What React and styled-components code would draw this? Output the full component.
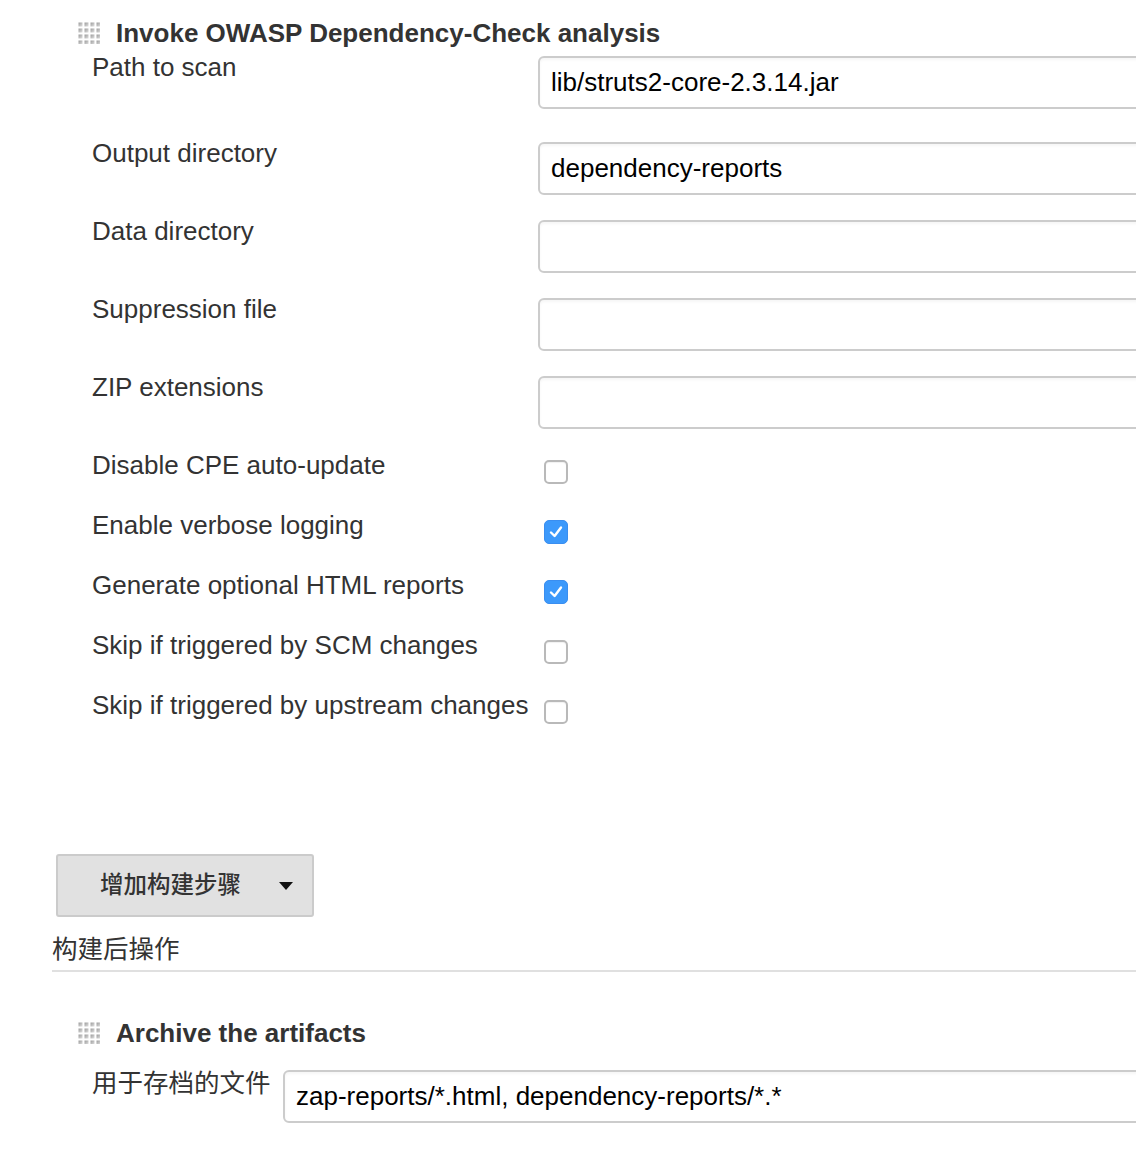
import styled, { createGlobalStyle } from "styled-components";

const GlobalStyle = createGlobalStyle`
  html, body {
    margin: 0;
    padding: 0;
    background: #fff;
    overflow: hidden;
  }
  body {
    font-family: "Liberation Sans", "Noto Sans CJK SC", Arial, sans-serif;
    color: #333;
  }
`;

const builderFields = [
  { label: "Path to scan", value: "lib/struts2-core-2.3.14.jar", height: 86 },
  { label: "Output directory", value: "dependency-reports" },
  { label: "Data directory", value: "" },
  { label: "Suppression file", value: "" },
  { label: "ZIP extensions", value: "" },
];

const builderOptions = [
  { label: "Disable CPE auto-update", checked: false },
  { label: "Enable verbose logging", checked: true },
  { label: "Generate optional HTML reports", checked: true },
  { label: "Skip if triggered by SCM changes", checked: false },
  { label: "Skip if triggered by upstream changes", checked: false },
];

const Grip = () => (
  <svg width="22" height="22" viewBox="0 0 22 22">
    <defs>
      <linearGradient id="dot" x1="0" y1="0" x2="1" y2="1">
        <stop offset="0" stopColor="#9a9a9a" />
        <stop offset="1" stopColor="#e2e2e2" />
      </linearGradient>
    </defs>
    {[0, 1, 2, 3].map((r) =>
      [0, 1, 2, 3].map((c) => (
        <rect
          key={`${r}-${c}`}
          x={c * 6 + 0.5}
          y={r * 6 + 0.5}
          width="4"
          height="4"
          fill="url(#dot)"
        />
      ))
    )}
  </svg>
);

const App = () => {
  return (
    <Page>
      <GlobalStyle />
      <Section>
        <SectionHeader>
          <Grip />
          <SectionTitle>Invoke OWASP Dependency-Check analysis</SectionTitle>
        </SectionHeader>

        {builderFields.map((field) => (
          <FieldRow key={field.label} $height={field.height || 78}>
            <Label>{field.label}</Label>
            <TextInput value={field.value} readOnly />
          </FieldRow>
        ))}

        {builderOptions.map((opt) => (
          <CheckRow key={opt.label}>
            <Label>{opt.label}</Label>
            <CheckBox $checked={opt.checked}>
              {opt.checked && (
                <svg width="16" height="16" viewBox="0 0 16 16">
                  <path
                    d="M3 8.5 L6.6 12 L13 3.5"
                    fill="none"
                    stroke="#fff"
                    strokeWidth="2.4"
                    strokeLinecap="round"
                    strokeLinejoin="round"
                  />
                </svg>
              )}
            </CheckBox>
          </CheckRow>
        ))}
      </Section>

      <AddStepButton>
        <span>增加构建步骤</span>
        <Caret />
      </AddStepButton>

      <GroupHeading>构建后操作</GroupHeading>

      <Section $top={42}>
        <SectionHeader>
          <Grip />
          <SectionTitle>Archive the artifacts</SectionTitle>
        </SectionHeader>
        <ArchiveRow>
          <CjkLabel>用于存档的文件</CjkLabel>
          <TextInput value="zap-reports/*.html, dependency-reports/*.*" readOnly />
        </ArchiveRow>
      </Section>
    </Page>
  );
};

export default App;

const Page = styled.div`
  padding: 14px 0 0 52px;
  overflow: hidden;
`;

const Section = styled.div`
  margin-top: ${({ $top }) => $top || 0}px;
`;

const SectionHeader = styled.div`
  display: flex;
  align-items: center;
  gap: 16px;
  height: 38px;
  padding-left: 26px;

  svg {
    flex: none;
  }
`;

const SectionTitle = styled.h3`
  margin: 0;
  font-size: 26px;
  font-weight: bold;
  color: #333;
  white-space: nowrap;
`;

const FieldRow = styled.div`
  display: grid;
  grid-template-columns: 446px 900px;
  height: ${({ $height }) => $height}px;
  padding-left: 40px;
  align-items: start;
`;

const Label = styled.div`
  font-size: 26px;
  line-height: 30px;
  color: #333;
  white-space: nowrap;
`;

const CjkLabel = styled(Label)`
  font-size: 25.5px;
  font-family: "Noto Sans CJK SC", sans-serif;
`;

const TextInput = styled.input`
  box-sizing: border-box;
  margin-top: 4px;
  height: 53px;
  width: 900px;
  padding: 0 11px;
  border: 2px solid #cccccc;
  border-radius: 6px;
  background: #fff;
  font-family: "Liberation Sans", Arial, sans-serif;
  font-size: 26px;
  color: #000;
  outline: none;
  box-shadow: inset 0 2px 3px rgba(0, 0, 0, 0.04);
`;

const CheckRow = styled.div`
  display: grid;
  grid-template-columns: 452px 24px;
  height: 60px;
  padding-left: 40px;
  align-items: start;
`;

const CheckBox = styled.div`
  box-sizing: border-box;
  margin-top: 10px;
  width: 24px;
  height: 24px;
  border-radius: 5px;
  display: flex;
  align-items: center;
  justify-content: center;
  background: ${({ $checked }) => ($checked ? "#3c99fb" : "#fff")};
  border: ${({ $checked }) =>
    $checked ? "1px solid #3a8ef0" : "2px solid #b9b9b9"};
  box-shadow: ${({ $checked }) =>
    $checked ? "none" : "inset 0 1px 1px rgba(0,0,0,0.06)"};
`;

const AddStepButton = styled.button`
  box-sizing: border-box;
  margin: 104px 0 0 4px;
  width: 258px;
  height: 63px;
  display: flex;
  align-items: center;
  padding: 0 0 0 42px;
  gap: 38px;
  background: #e1e1e1;
  border: 2px solid #cbcbcb;
  border-radius: 3px;
  font-family: "Noto Sans CJK SC", sans-serif;
  font-size: 23.5px;
  font-weight: 500;
  color: #333;

  span {
    line-height: 1;
    margin-top: -4px;
  }
`;

const Caret = styled.i`
  width: 0;
  height: 0;
  border-left: 7px solid transparent;
  border-right: 7px solid transparent;
  border-top: 8px solid #111;
`;

const GroupHeading = styled.h2`
  margin: 14px 0 0 0;
  padding-bottom: 7px;
  width: 1084px;
  font-family: "Noto Sans CJK SC", sans-serif;
  font-size: 25.5px;
  font-weight: normal;
  line-height: 32px;
  color: #333;
  border-bottom: 2px solid #e0e0e0;
`;

const ArchiveRow = styled.div`
  display: grid;
  grid-template-columns: 191px 900px;
  margin-top: 14px;
  padding-left: 40px;
  align-items: start;
`;
